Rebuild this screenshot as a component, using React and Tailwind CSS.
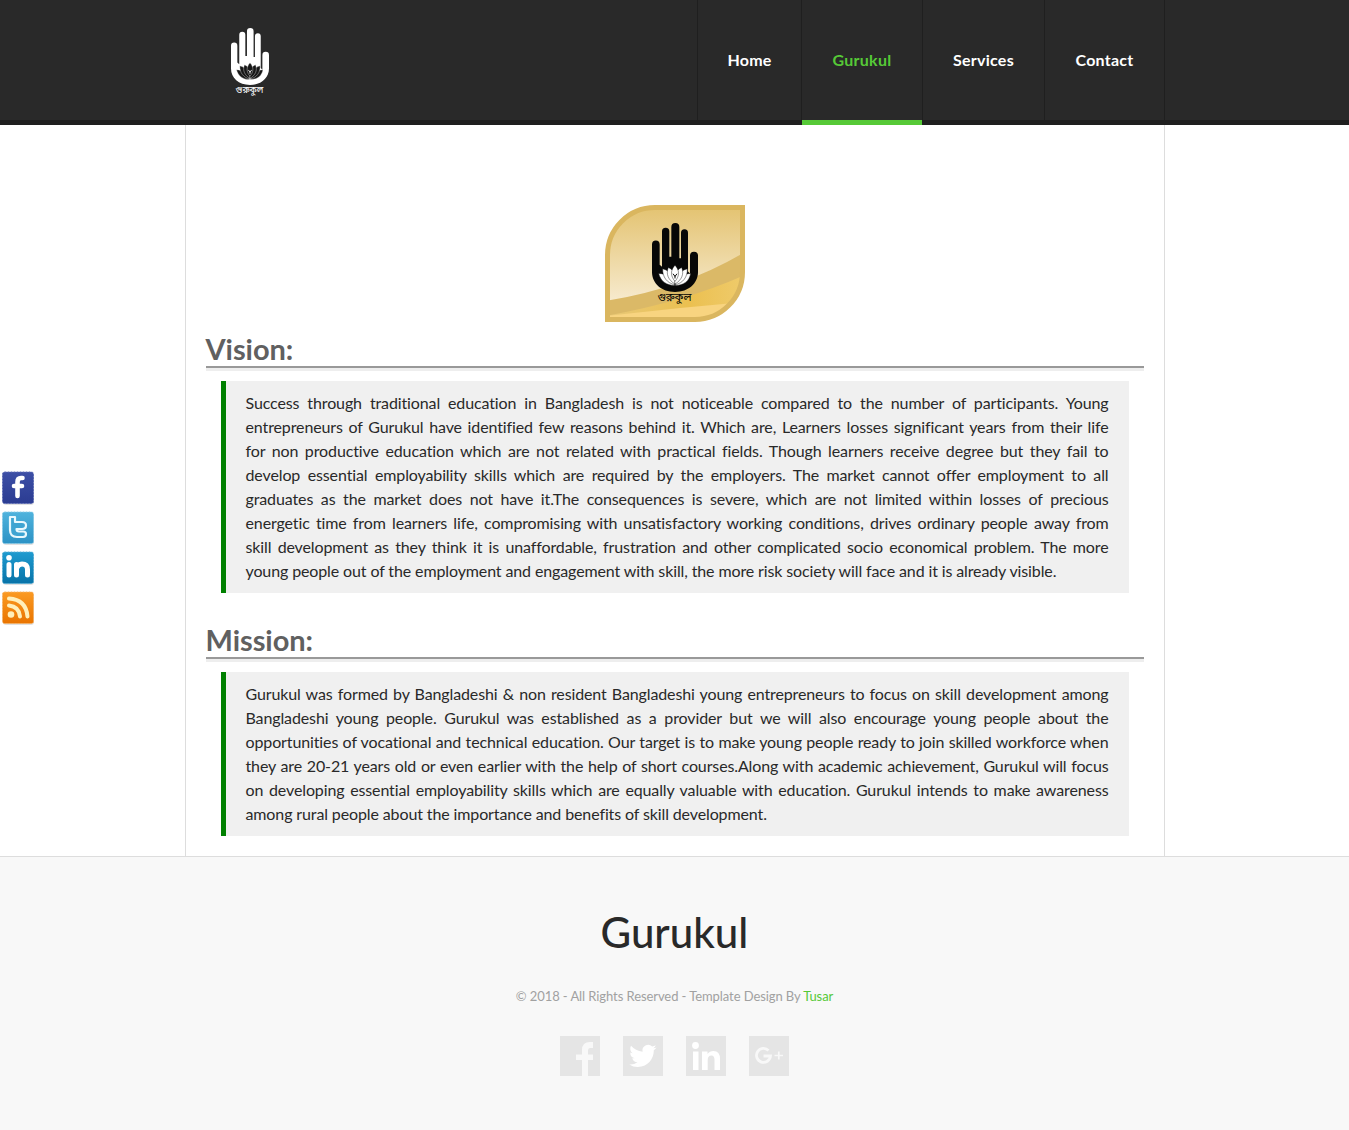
import React from "react";

const PETALS = [
  "M191 236 C212 236 232 250 240 272 C214 273 196 258 191 236Z",
  "M287 236 C268 236 248 250 240 272 C266 273 284 258 287 236Z",
  "M203 222 C226 228 239 246 240 270 C216 266 202 246 203 222Z",
  "M277 222 C254 228 241 246 240 270 C264 266 278 246 277 222Z",
  "M220 218 C239 226 245 246 240 268 C220 256 212 238 220 218Z",
  "M260 218 C241 226 235 246 240 268 C260 256 268 238 260 218Z",
  "M240 211 C254 226 254 244 240 260 C226 244 226 226 240 211Z",
];

function Hand({ color, petal, className }) {
  return (
    <svg viewBox="171 84 138 208" preserveAspectRatio="none" className={className}>
      <path
        fill={color}
        d="M171 149 a11.5 12 0 0 1 23 0 V210 L201 216 V109 a11 11 0 0 1 22 0 V186 H229 V96 a12 12 0 0 1 24 0 V190 H258 V114 a10.500 11 0 0 1 21 0 V230 L285 236 V183 a12 12 0 0 1 24 0 V232 C309 266 281 292 240 292 C199 292 171 266 171 232Z"
      />
      {PETALS.map((d) => (
        <path key={d} d={d} fill={petal} stroke={color} strokeWidth="1.300" />
      ))}
      <path d="M234 237 l6 8 l6 -8 M240 244 v7" stroke={color} strokeWidth="3" fill="none" />
    </svg>
  );
}

const bengali = "font-['Noto_Sans_Bengali','Noto_Sans',sans-serif]";

function Emblem() {
  return (
    <div className="relative mx-auto h-[117px] w-[140px]">
      <svg viewBox="0 0 140 117" className="block h-full w-full">
        <defs>
          <linearGradient id="gold" x1="0" y1="0" x2="0" y2="1">
            <stop offset="0" stopColor="#e3c26f" />
            <stop offset="1" stopColor="#fbf3e3" />
          </linearGradient>
          <linearGradient id="band" x1="0" y1="0" x2="1" y2="0">
            <stop offset="0" stopColor="#e8c97a" />
            <stop offset="0.6" stopColor="#ebc050" />
            <stop offset="1" stopColor="#efcb6c" />
          </linearGradient>
          <clipPath id="leaf">
            <path d="M50 3 H137 V67 A47 47 0 0 1 90 114 H3 V50 A47 47 0 0 1 50 3Z" />
          </clipPath>
        </defs>
        <g clipPath="url(#leaf)">
          <path d="M0 0H140V117H0Z" fill="url(#gold)" />
          <path d="M0 96 Q78 84 140 47 V117 H0Z" fill="#dbb967" />
          <path d="M0 111 Q80 97 140 70 V117 H0Z" fill="url(#band)" />
          <path d="M0 111 Q70 103 140 97 V117 H0Z" fill="#f8d480" />
        </g>
        <path
          d="M50 2.500 H137.500 V67 A47.500 47.500 0 0 1 90 114.500 H2.500 V50 A47.500 47.500 0 0 1 50 2.500Z"
          fill="none"
          stroke="#dab65f"
          strokeWidth="5"
        />
      </svg>
      <div className="absolute left-[47px] top-[18px] w-[46px]">
        <Hand color="#070707" petal="#ffffff" className="block h-[69px] w-[46px]" />
        <div className={`${bengali} text-center text-[11px] leading-[13px] whitespace-nowrap text-black`}>গুরুকুল</div>
      </div>
    </div>
  );
}

const nav = [
  { label: "Home", cls: "w-[104px] text-white" },
  { label: "Gurukul", cls: "w-[121px] text-[#56c937]", active: true },
  { label: "Services", cls: "w-[122px] text-white" },
  { label: "Contact", cls: "w-[120px] text-white" },
];

function Header() {
  return (
    <header className="h-[125px] border-b-[5px] border-[#1f1f1f] bg-[#292929]">
      <div className="mx-auto flex w-[980px] justify-between">
        <div className="ml-[46px] w-[38px] pt-7">
          <Hand color="#ffffff" petal="#171717" className="block h-[57px] w-[38px]" />
          <div className={`${bengali} text-center text-[9px] leading-[13px] whitespace-nowrap text-white`}>গুরুকুল</div>
        </div>
        <nav className="flex border-l border-[#1f1f1f] text-base font-bold tracking-[0.25px]">
          {nav.map((n) => (
            <a key={n.label} className={`flex h-[125px] flex-col border-r border-[#1f1f1f] ${n.cls}`}>
              <span className="flex h-[120px] items-center justify-center pl-px">{n.label}</span>
              {n.active && <span className="h-[5px] bg-[#56c937]" />}
            </a>
          ))}
        </nav>
      </div>
    </header>
  );
}

function Section({ title, lines }) {
  return (
    <section>
      <h2 className="h-[34px] border-b-2 border-[#999] text-[29px] leading-[30px] font-bold tracking-[-0.05px] text-[#606060] shadow-[0_3px_0_#eee]">
        {title}
      </h2>
      <p className="mx-[15px] mt-[13px] border-l-[5px] border-[green] bg-[#f0f0f0] px-5 py-2.5 text-base leading-6 tracking-[-0.12px] text-[#292929]">
        {lines.map((line, i) => (
          <span
            key={line}
            className={i < lines.length - 1 ? "block text-justify [text-align-last:justify]" : "block"}
          >
            {line}{" "}
          </span>
        ))}
      </p>
    </section>
  );
}

const vision = [
  "Success through traditional education in Bangladesh is not noticeable compared to the number of participants. Young",
  "entrepreneurs of Gurukul have identified few reasons behind it. Which are, Learners losses significant years from their life",
  "for non productive education which are not related with practical fields. Though learners receive degree but they fail to",
  "develop essential employability skills which are required by the employers. The market cannot offer employment to all",
  "graduates as the market does not have it.The consequences is severe, which are not limited within losses of precious",
  "energetic time from learners life, compromising with unsatisfactory working conditions, drives ordinary people away from",
  "skill development as they think it is unaffordable, frustration and other complicated socio economical problem. The more",
  "young people out of the employment and engagement with skill, the more risk society will face and it is already visible.",
];

const mission = [
  "Gurukul was formed by Bangladeshi & non resident Bangladeshi young entrepreneurs to focus on skill development among",
  "Bangladeshi young people. Gurukul was established as a provider but we will also encourage young people about the",
  "opportunities of vocational and technical education. Our target is to make young people ready to join skilled workforce when",
  "they are 20-21 years old or even earlier with the help of short courses.Along with academic achievement, Gurukul will focus",
  "on developing essential employability skills which are equally valuable with education. Gurukul intends to make awareness",
  "among rural people about the importance and benefits of skill development.",
];

const box = { width: 34, height: 34, viewBox: "0 0 34 34", className: "block" };

function Tile({ id, from, to, edge, children }) {
  return (
    <svg {...box}>
      <defs>
        <linearGradient id={id} x1="0" y1="0" x2="0" y2="1">
          <stop offset="0" stopColor={from} />
          <stop offset="1" stopColor={to} />
        </linearGradient>
      </defs>
      <rect x="2" y="3" width="31" height="31" rx="3" fill="#000" opacity="0.12" />
      <rect x="1.500" y="1" width="31" height="31.500" rx="2" fill={`url(#${id})`} stroke={edge} strokeWidth="1" strokeDasharray="2 1" />
      {children}
    </svg>
  );
}

function SideIcons() {
  return (
    <div className="fixed top-[471px] left-px flex flex-col gap-1.5">
      <Tile id="fb" from="#3d4fa6" to="#2b3c92" edge="#5c6bb4">
        <path d="M21.500 7 H20 Q16.500 7 16.500 11 V25 M13 15 H21" fill="none" stroke="#fff" strokeWidth="4.600" strokeLinecap="round" />
      </Tile>
      <Tile id="tw" from="#4fb3dd" to="#2c92c5" edge="#83c8e5">
        <path
          d="M9 6 H14 V11 H21 Q25 11 25 14.500 Q25 18 21 18 H15.500 Q15.500 20.500 18 20.500 H22 Q25 20.500 25 23 Q25 26 22 26 H16 Q9 26 9 19Z"
          fill="#3fa4d2"
          stroke="#e9f8fd"
          strokeWidth="2.200"
          strokeLinejoin="round"
        />
      </Tile>
      <Tile id="li" from="#1e9bd0" to="#0873a8" edge="#54add4">
        <path d="M8 13.500 V24 M15.500 13.500 V24 M15.500 17.500 Q17 13 21 13 Q26.500 13 26.500 18.500 V24" fill="none" stroke="#fff" strokeWidth="5" strokeLinecap="round" />
        <circle cx="8" cy="6.800" r="2.800" fill="#fff" />
      </Tile>
      <Tile id="rss" from="#fb9a22" to="#e97400" edge="#f5b265">
        <path d="M8 14.500 Q18 15.500 19 25.500 M8 7.500 Q25 8.500 26.500 25.500" fill="none" stroke="#ffefba" strokeWidth="4" strokeLinecap="round" />
        <circle cx="10" cy="23.500" r="3.300" fill="#ffefba" />
      </Tile>
    </div>
  );
}

function Footer() {
  return (
    <footer className="h-[274px] border-t border-[#ddd] bg-[#f8f8f8] text-center">
      <div className="pt-[49px] text-[42px] leading-[52px] font-medium text-[#292929]">Gurukul</div>
      <p className="mt-7 text-[13px] leading-5 tracking-[-0.08px] text-[#a1a1a1]">
        © 2018 - All Rights Reserved - Template Design By <a className="text-[#56c937]">Tusar</a>
      </p>
      <div className="mt-[30px] flex justify-center gap-[23px]">
        <svg viewBox="0 0 40 40" className="h-10 w-10 bg-[#e5e5e5]">
          <path fill="#f8f8f8" d="M22 40 V24 H16 V18.500 H22 V14 Q22 6 30 6 H33 V12 H30 Q28 12 28 14.500 V18.500 H33 V24 H28 V40Z" />
        </svg>
        <svg viewBox="0 0 40 40" className="h-10 w-10 bg-[#e5e5e5]">
          <path
            transform="translate(6.200 6.200) scale(1.140)"
            fill="#fff"
            d="M23.953 4.570a10 10 0 0 1-2.825.775 4.958 4.958 0 0 0 2.163-2.723c-.951.555-2.005.959-3.127 1.184a4.920 4.920 0 0 0-8.384 4.482C7.690 8.095 4.067 6.130 1.640 3.162a4.822 4.822 0 0 0-.666 2.475c0 1.710.870 3.213 2.188 4.096a4.904 4.904 0 0 1-2.228-.616v.060a4.923 4.923 0 0 0 3.946 4.827 4.996 4.996 0 0 1-2.212.085 4.936 4.936 0 0 0 4.604 3.417 9.867 9.867 0 0 1-6.102 2.105c-.390 0-.779-.023-1.170-.067a13.995 13.995 0 0 0 7.557 2.209c9.053 0 13.998-7.496 13.998-13.985 0-.210 0-.420-.015-.630A9.935 9.935 0 0 0 24 4.590z"
          />
        </svg>
        <svg viewBox="0 0 40 40" className="h-10 w-10 bg-[#e5e5e5]">
          <circle cx="9.500" cy="9.500" r="3.400" fill="#fff" />
          <path fill="#fff" d="M7 15.500 H12.500 V34 H7Z M16 15.500 H21.500 V18 Q23.500 15 27.500 15 Q34 15 34 23 V34 H28.500 V24 Q28.500 19.500 25.500 19.500 Q21.700 19.500 21.700 24 V34 H16Z" />
        </svg>
        <svg viewBox="0 0 40 40" className="h-10 w-10 bg-[#e5e5e5]">
          <path d="M19.500 14.500 A7 7 0 1 0 21.500 20 H14.500" fill="none" stroke="#f8f8f8" strokeWidth="2.800" />
          <path d="M25.500 19.500 H34 M29.800 15.500 V23.500" stroke="#f8f8f8" strokeWidth="1.700" />
        </svg>
      </div>
    </footer>
  );
}

export default function App() {
  return (
    <div className="min-h-[1130px] bg-white font-[Lato,sans-serif]">
      <Header />
      <main className="mx-auto h-[731px] w-[980px] border-x border-[#ddd] px-5 pt-20">
        <Emblem />
        <div className="mt-3 flex flex-col gap-8">
          <Section title="Vision:" lines={vision} />
          <Section title="Mission:" lines={mission} />
        </div>
      </main>
      <Footer />
      <SideIcons />
    </div>
  );
}
